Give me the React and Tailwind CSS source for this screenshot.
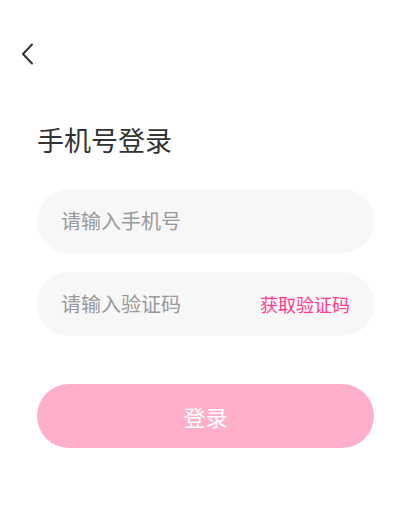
import { useState } from "react";

export default function App() {
  const [phone, setPhone] = useState("");
  const [code, setCode] = useState("");

  return (
    <div
      className="min-h-[510px] w-full bg-white"
      style={{ fontFamily: '"Noto Sans CJK SC", "Noto Sans", sans-serif' }}
    >
      <div className="px-[20px] pt-[43px]">
        <button className="flex h-[22px] w-[16px] items-center">
          <svg width="14" height="22" viewBox="0 0 14 22" fill="none">
            <path
              d="M12 1.5 L3 11 L12 20.5"
              stroke="#333"
              strokeWidth="2"
              strokeLinecap="round"
              strokeLinejoin="round"
            />
          </svg>
        </button>
      </div>

      <div className="px-[37px]">
        <h1 className="mt-[56px] text-[27px] leading-[38px] text-[#333]">
          手机号登录
        </h1>

        <div className="mt-[30px] flex flex-col gap-[19px]">
          <div className="flex h-[64px] items-center rounded-full bg-[#f7f7f7] px-[24px]">
            <input
              value={phone}
              onChange={(e) => setPhone(e.target.value)}
              placeholder="请输入手机号"
              className="w-full bg-transparent text-[20px] text-[#333] outline-none placeholder:text-[#999]"
            />
          </div>

          <div className="flex h-[64px] items-center rounded-full bg-[#f7f7f7] px-[24px]">
            <input
              value={code}
              onChange={(e) => setCode(e.target.value)}
              placeholder="请输入验证码"
              className="min-w-0 flex-1 bg-transparent text-[20px] text-[#333] outline-none placeholder:text-[#999]"
            />
            <span className="shrink-0 text-[18px] text-[#ff3d8b]">获取验证码</span>
          </div>
        </div>

        <button className="mt-[48px] flex h-[64px] w-full items-center justify-center rounded-full bg-[#ffb0c8] text-[22px] text-white">
          登录
        </button>
      </div>
    </div>
  );
}
